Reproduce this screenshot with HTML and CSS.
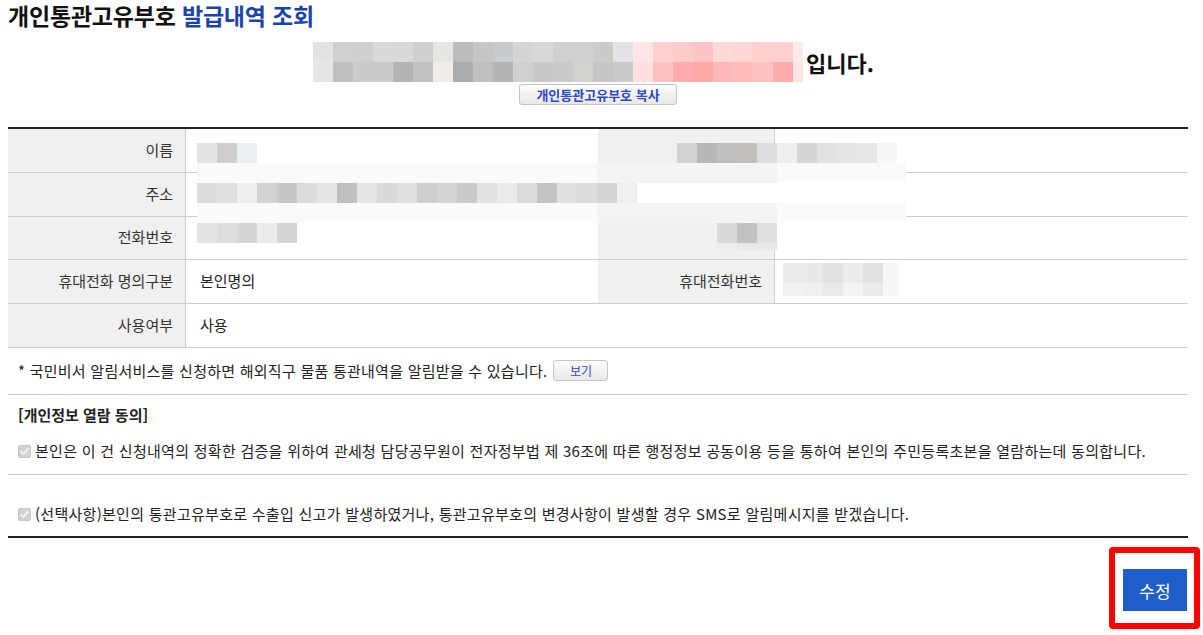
FILE: index.html
```html
<!DOCTYPE html>
<html lang="ko">
<head>
<meta charset="utf-8">
<title>개인통관고유부호 발급내역 조회</title>
<link rel="stylesheet" href="styles.css">
</head>
<body>
<div class="page">
  <h1 class="title">개인통관고유부호 <span class="accent">발급내역 조회</span></h1>

  <div class="code-line">
    <div class="mosaic-code" aria-label="가려진 통관고유부호">
      <div class="mz-row code-r1"></div>
      <div class="mz-row code-r2"></div>
    </div>
    <span class="code-suffix">입니다.</span>
  </div>
  <div class="copy-line">
    <button type="button" class="btn-sub btn-copy">개인통관고유부호 복사</button>
  </div>

  <div class="table-wrap">
    <table class="info">
      <colgroup>
        <col class="c-th1"><col class="c-td1"><col class="c-th2"><col class="c-td2">
      </colgroup>
      <tbody>
        <tr>
          <th>이름</th>
          <td></td>
          <th></th>
          <td></td>
        </tr>
        <tr>
          <th>주소</th>
          <td colspan="3"></td>
        </tr>
        <tr class="short">
          <th>전화번호</th>
          <td></td>
          <th></th>
          <td></td>
        </tr>
        <tr>
          <th>휴대전화 명의구분</th>
          <td>본인명의</td>
          <th>휴대전화번호</th>
          <td></td>
        </tr>
        <tr>
          <th>사용여부</th>
          <td colspan="3">사용</td>
        </tr>
      </tbody>
    </table>

    <div class="mask mask-name"><div class="mz-row name-r1"></div></div>
    <div class="mask mask-strip strip-1"></div>
    <div class="mask mask-addr"><div class="mz-row addr-r1"></div></div>
    <div class="mask mask-strip strip-2"></div>
    <div class="mask mask-phone"><div class="mz-row phone-r1"></div></div>
    <div class="mask mask-rname"><div class="mz-row rname-r1"></div></div>
    <div class="mask mask-rphone"><div class="mz-row rphone-r1"></div><div class="mz-row rphone-r2"></div></div>
    <div class="mask mask-mobile"><div class="mz-row mobile-r1"></div><div class="mz-row mobile-r2"></div></div>
  </div>

  <div class="notice">
    <span>* 국민비서 알림서비스를 신청하면 해외직구 물품 통관내역을 알림받을 수 있습니다.</span>
    <button type="button" class="btn-sub btn-view">보기</button>
  </div>

  <div class="consent">
    <div class="consent-title">[개인정보 열람 동의]</div>
    <div class="check-line">
      <span class="chk"><svg viewBox="0 0 13 13" width="13" height="13"><path d="M3 6.8 L5.4 9.2 L10 3.8" fill="none" stroke="#f4f4f4" stroke-width="1.8" stroke-linecap="round" stroke-linejoin="round"/></svg></span>
      <span>본인은 이 건 신청내역의 정확한 검증을 위하여 관세청 담당공무원이 전자정부법 제 36조에 따른 행정정보 공동이용 등을 통하여 본인의 주민등록초본을 열람하는데 동의합니다.</span>
    </div>
  </div>

  <div class="consent consent-last">
    <div class="check-line">
      <span class="chk"><svg viewBox="0 0 13 13" width="13" height="13"><path d="M3 6.8 L5.4 9.2 L10 3.8" fill="none" stroke="#f4f4f4" stroke-width="1.8" stroke-linecap="round" stroke-linejoin="round"/></svg></span>
      <span>(선택사항)본인의 통관고유부호로 수출입 신고가 발생하였거나, 통관고유부호의 변경사항이 발생할 경우 SMS로 알림메시지를 받겠습니다.</span>
    </div>
  </div>

  <div class="actions">
    <div class="highlight">
      <button type="button" class="btn-primary">수정</button>
    </div>
  </div>
</div>
</body>
</html>
```

FILE: styles.css
```css
* { box-sizing: border-box; }

html, body {
  margin: 0;
  background: #fff;
}

body {
  font-family: "Noto Sans CJK KR", "Noto Sans", sans-serif;
  font-size: 15px;
  color: #222;
}

.page {
  width: 1180px;
  margin-left: 8px;
  padding-top: 2px;
}

.title {
  margin: 0;
  font-size: 23px;
  line-height: 26px;
  font-weight: 700;
  color: #111;
  letter-spacing: -0.2px;
}

.title .accent { color: #1a44ad; }

/* code line */
.code-line {
  display: flex;
  justify-content: center;
  align-items: center;
  margin-top: 14px;
  padding-right: 9px;
}

.mosaic-code {
  width: 490px;
  height: 40px;
}

.mz-row { height: 20px; }

.code-r1 {
  background: linear-gradient(to right,
    #e3e3e3 0 20px, #d0d0ce 20px 40px, #cfd0cd 40px 60px, #dadada 60px 80px,
    #d9d9d9 80px 100px, #cfcfcf 100px 120px, #e7e6e2 120px 140px, #bbbcbe 140px 160px,
    #c6c6c6 160px 180px, #c9ccce 180px 200px, #d5d5d3 200px 220px, #d9d9d9 220px 240px,
    #d0d0d0 240px 260px, #cfd0cf 260px 280px, #cbcbc9 280px 300px, #e2e3e6 300px 320px,
    #ffe6e6 320px 340px, #ffd0d0 340px 360px, #ffcccc 360px 380px, #ffc4c4 380px 400px,
    #ffd8d8 400px 420px, #ffd6d6 420px 440px, #ffd0d0 440px 460px, #ffd0d0 460px 480px,
    #ffeaea 480px 490px);
}

.code-r2 {
  background: linear-gradient(to right,
    #e6e6e6 0 20px, #c0c1be 20px 40px, #cbcbcb 40px 60px, #cacbca 60px 80px,
    #b4b4b4 80px 100px, #c1c1bf 100px 120px, #efece9 120px 140px, #aaadb0 140px 160px,
    #c0c0be 160px 180px, #b3b4b3 180px 200px, #d1d0ce 200px 220px, #c8c8ca 220px 240px,
    #c9cacc 240px 260px, #d3d2cf 260px 280px, #c6c6c6 280px 300px, #cacbcc 300px 320px,
    #ffe0e0 320px 340px, #ffc0c0 340px 360px, #ffacac 360px 380px, #ffa8a8 380px 400px,
    #ffb8b8 400px 420px, #ffbaba 420px 440px, #ffc0c0 440px 460px, #ffacac 460px 480px,
    #ffe4e4 480px 490px);
}

.code-suffix {
  margin-left: 3px;
  font-size: 22px;
  line-height: 30px;
  font-weight: 700;
  color: #111;
}

.copy-line {
  display: flex;
  justify-content: center;
  margin-top: 2px;
}

.btn-sub {
  height: 21px;
  padding: 0;
  border: 1px solid #c6c6c6;
  border-radius: 3px;
  background: linear-gradient(#fdfdfd, #e8e8e8);
  color: #3047c4;
  font-family: inherit;
  font-size: 13px;
  line-height: 19px;
  cursor: pointer;
}

.btn-copy {
  width: 158px;
  font-weight: 700;
}

.btn-view {
  width: 55px;
  margin-left: 6px;
  font-size: 12px;
}

/* table */
.table-wrap {
  position: relative;
  margin-top: 22px;
}

.info {
  width: 100%;
  table-layout: fixed;
  border-collapse: separate;
  border-spacing: 0;
  border-top: 2px solid #222;
}

.c-th1 { width: 178px; }
.c-td1 { width: 412px; }
.c-th2 { width: 177px; }
.c-td2 { width: 413px; }

.info th,
.info td {
  height: 44px;
  padding: 0 0 2px;
  border-bottom: 1px solid #ccc;
  font-size: 15px;
  font-weight: 400;
  line-height: 20px;
}

.info tr.short th,
.info tr.short td { height: 43px; }

.info th {
  background: #f0f0f0;
  text-align: right;
  padding-right: 12px;
  border-right: 1px solid #ccc;
  color: #333;
}

.info td {
  text-align: left;
  padding-left: 14px;
  color: #222;
}

/* redaction masks laid over the table */
.mask { position: absolute; }

.mask-name { left: 189px; top: 16px; width: 60px; }
.name-r1 {
  background: linear-gradient(to right, #e3e5e2 0 20px, #d1cdcc 20px 40px, #ebeff2 40px 60px);
}

.mask-strip {
  left: 189px;
  width: 709px;
  height: 20px;
  background: linear-gradient(to right, #fafafa 0 400px, #f4f4f4 400px 580px, #fafafa 580px 709px);
}
.strip-1 { top: 36px; }
.strip-2 { top: 76px; }

.mask-addr { left: 189px; top: 56px; width: 440px; }
.addr-r1 {
  background: linear-gradient(to right,
    #dcdcdc 0 20px, #e0e0df 20px 40px, #efefef 40px 60px, #d3d3d2 60px 80px,
    #c6c8c7 80px 100px, #dbdbdb 100px 120px, #e6e6e6 120px 140px, #c1bfc2 140px 160px,
    #e5e5e5 160px 180px, #dcd9d9 180px 200px, #e0e0e0 200px 220px, #ccd0cf 220px 240px,
    #d5d5d3 240px 260px, #c9cbca 260px 280px, #e2e2e0 280px 300px, #eaeaea 300px 320px,
    #dadcdb 320px 340px, #c4c4c4 340px 360px, #e1dfdd 360px 380px, #dcdcdc 380px 400px,
    #d4d4d3 400px 420px, #f0f0f2 420px 440px);
}

.mask-phone { left: 189px; top: 96px; width: 100px; }
.phone-r1 {
  background: linear-gradient(to right,
    #e4e2e2 0 20px, #dddde0 20px 40px, #d6d6d6 40px 60px, #ebebea 60px 80px, #d5d7d6 80px 100px);
}

.mask-rname { left: 669px; top: 16px; width: 220px; }
.rname-r1 {
  background: linear-gradient(to right,
    #d3d2ce 0 20px, #b8b8b8 20px 40px, #bfbfc1 40px 60px, #c3bfbb 60px 80px,
    #dcdde0 80px 100px, #efefee 100px 120px, #d6d6d6 120px 140px, #e1e3e0 140px 160px,
    #e7e6e7 160px 180px, #e8e8e8 180px 200px, #f6f6f6 200px 220px);
}

.mask-rphone { left: 709px; top: 96px; width: 60px; }
.rphone-r1 {
  background: linear-gradient(to right, #d9d9d9 0 20px, #c3c1c2 20px 40px, #e0e0e2 40px 60px);
}
.rphone-r2 {
  height: 7px;
  background: linear-gradient(to right, #eeeeee 0 20px, #e8e8e8 20px 40px, #e9e9e9 40px 60px);
}

.mask-mobile { left: 775px; top: 136px; width: 116px; }
.mobile-r1 {
  background: linear-gradient(to right,
    #e9eaea 0 20px, #e9e9e9 20px 40px, #e2e2e4 40px 60px, #ebebeb 60px 80px,
    #e2e2e2 80px 100px, #f7f7f7 100px 116px);
}
.mobile-r2 {
  height: 13px;
  background: linear-gradient(to right,
    #f2f2f2 0 20px, #f0f0f0 20px 40px, #e9eae9 40px 60px, #f4f4f4 60px 80px,
    #ebebea 80px 100px, #f8f8f8 100px 116px);
}

/* notice + consent */
.notice {
  display: flex;
  align-items: center;
  height: 47px;
  padding: 0 10px 1px;
  border-bottom: 1px solid #ccc;
  line-height: 20px;
  letter-spacing: 0.25px;
}

.notice .btn-sub { letter-spacing: 0; }

.consent {
  padding: 0 10px 13px;
  border-bottom: 1px solid #ccc;
}

.consent-title {
  padding-top: 10px;
  font-weight: 700;
  line-height: 20px;
  color: #222;
}

.check-line {
  display: flex;
  align-items: center;
  margin-top: 16px;
  line-height: 20px;
  letter-spacing: 0.28px;
}

.chk {
  display: flex;
  width: 13px;
  height: 13px;
  margin-right: 4px;
  flex: none;
  background: #d2d2d2;
  border: 1px solid #c6c6c6;
  border-radius: 2px;
  align-items: center;
  justify-content: center;
}

.chk svg { display: block; margin: -1px; }

.consent-last {
  padding-top: 29px;
  padding-bottom: 12px;
  border-bottom: 2px solid #222;
}

.consent-last .check-line { margin-top: 0; }

/* actions */
.actions {
  display: flex;
  justify-content: flex-end;
  margin-top: 9px;
  margin-right: -12px;
}

.highlight {
  border: 6px solid #ff0000;
  border-radius: 4px;
  padding: 16px 7px 12px 8px;
}

.btn-primary {
  display: block;
  width: 64px;
  height: 42px;
  border: 0;
  padding: 0;
  background: #1f5dc9;
  color: #fff;
  font-family: inherit;
  font-size: 17px;
  cursor: pointer;
}
```
